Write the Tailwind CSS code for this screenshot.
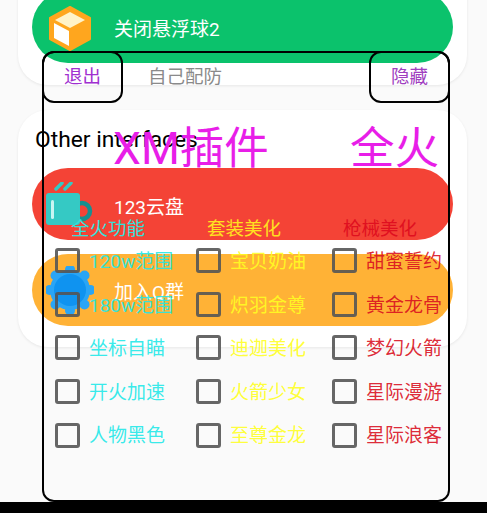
<!DOCTYPE html>
<html lang="en">
<head>
  <meta charset="UTF-8">
  <meta name="viewport" content="width=device-width, initial-scale=1.0">
  <title>XM</title>
  <script src="https://cdn.jsdelivr.net/npm/@tailwindcss/browser@4"></script>
</head>
<body class="relative w-[487px] h-[513px] overflow-hidden bg-[#fafafa] font-['Roboto','Noto_Sans_CJK_SC',sans-serif]">

  <div class="flex flex-col h-full">
    <!-- top card -->
    <div class="ml-[18px] mr-[20px] -mt-[40px] h-[125px] pt-[31px] px-[14px] bg-white rounded-[30px] shadow-[0_1px_3px_rgba(0,0,0,0.08)]">
      <div class="flex items-center h-[72px] pl-[14px] rounded-[36px] bg-[#0bc26c] text-white text-[19px]">
        <svg class="shrink-0 w-[48px] h-[48px] mt-[2px] mr-[20px]" viewBox="0 0 48 48">
          <path d="M24 3 L44 14 V35 L24 46 L4 35 V14 Z" fill="#ffa61e" stroke="#ffa61e" stroke-width="2" stroke-linejoin="round"/>
          <path d="M24 8 L39 16 L24 24 L9 16 Z" fill="#fff3c9"/>
          <path d="M8 19 L23 27 V42 L8 34 Z" fill="#ffffff"/>
        </svg>
        <span class="mt-[6px]">关闭悬浮球2</span>
      </div>
    </div>

    <!-- second card -->
    <div class="ml-[18px] mr-[20px] mt-[25px] h-[237px] px-[14px] bg-white rounded-[30px] shadow-[0_1px_3px_rgba(0,0,0,0.08)]">
      <p class="pl-[3px] pt-[16px] h-[58px] text-[22.8px] leading-[28px] text-black whitespace-nowrap">Other interfaces</p>
      <div class="flex items-center h-[72px] pl-[14px] rounded-[36px] bg-[#f44336] text-white text-[19px]">
        <svg class="shrink-0 w-[48px] h-[48px] mt-[4px] mr-[20px]" viewBox="0 0 48 48">
          <circle cx="36" cy="29" r="8" fill="none" stroke="#178f90" stroke-width="4.5"/>
          <rect x="0" y="11" width="34" height="32" rx="3" fill="#35c9c4"/>
          <rect x="5" y="18" width="3" height="19" rx="1.5" fill="#c9f5f2"/>
          <path d="M10 7 L16 1 M19 7 L25 1" stroke="#35c9c4" stroke-width="3.5" stroke-linecap="round"/>
        </svg>
        <span class="mt-[8px]">123云盘</span>
      </div>
      <div class="flex items-center h-[72px] mt-[14px] pl-[14px] rounded-[36px] bg-[#ffb236] text-white text-[19px]">
        <svg class="shrink-0 w-[48px] h-[48px] mr-[20px]" viewBox="0 0 48 48">
          <g fill="#2aa5f5">
            <circle cx="24" cy="24" r="20"/>
            <circle cx="24" cy="3.5" r="5"/><circle cx="24" cy="44.5" r="5"/>
            <circle cx="3.5" cy="24" r="5"/><circle cx="44.5" cy="24" r="5"/>
            <circle cx="9.5" cy="9.5" r="5"/><circle cx="38.5" cy="9.5" r="5"/>
            <circle cx="9.5" cy="38.5" r="5"/><circle cx="38.5" cy="38.5" r="5"/>
          </g>
          <circle cx="24" cy="24" r="16" fill="#0f93f0"/>
        </svg>
        <span class="mt-[6px]">加入Q群</span>
      </div>
    </div>

    <!-- black bar at the bottom -->
    <div class="mt-auto h-[11px] bg-black"></div>
  </div>

  <!-- floating menu over the page -->
  <div class="absolute left-[42px] top-[51px] w-[408px] h-[451px] border-2 border-black rounded-[12px] text-[19px]">
    <div class="flex items-center -mx-[2px] -mt-[2px] text-[18.5px]">
      <div class="flex items-center justify-center w-[81px] h-[52px] pt-[2px] border-2 border-black rounded-[12px] text-[#a030d0]">退出</div>
      <span class="ml-[25px] pt-[2px] text-[#8a8a8a]">自己配防</span>
      <div class="flex items-center justify-center ml-auto w-[81px] h-[52px] pt-[2px] border-2 border-black rounded-[12px] text-[#a040c0]">隐藏</div>
    </div>

    <div class="flex justify-between mt-[20px] pl-[69px] pr-[9px] h-[52px] leading-[52px] text-[44.5px] text-[#e81ee8] whitespace-nowrap">
      <span>XM插件</span>
      <span>全火</span>
    </div>

    <div class="flex mt-[42px] pl-[27px] h-[22px] leading-[24px] text-[18.5px]">
      <span class="w-[136px] text-[#33e0dc]">全火功能</span>
      <span class="w-[136px] text-[#ffe020]">套装美化</span>
      <span class="w-[100px] text-[#e01020]">枪械美化</span>
    </div>

    <div id="options" class="grid grid-cols-[141px_136px_1fr] auto-rows-[43.6px] items-center pl-[11px]"></div>
  </div>

  <script>
    const rows = [
      ["120w范围", "宝贝奶油", "甜蜜誓约"],
      ["180w范围", "炽羽金尊", "黄金龙骨"],
      ["坐标自瞄", "迪迦美化", "梦幻火箭"],
      ["开火加速", "火箭少女", "星际漫游"],
      ["人物黑色", "至尊金龙", "星际浪客"]
    ];
    const colours = ["text-[#1ee8e8]/90", "text-[#ffff22]/90", "text-[#d90f20]/90"];
    const options = document.getElementById("options");

    rows.forEach(row => {
      row.forEach((name, i) => {
        const label = document.createElement("label");
        label.className = "flex items-center gap-[9px] " + colours[i];
        label.innerHTML = `
          <span class="w-[25px] h-[25px] border-[3px] border-[#555]/90 rounded-[3px]"></span>
          <span class="mt-[3px] whitespace-nowrap">${name}</span>
        `;
        options.appendChild(label);
      });
    });
  </script>

</body>
</html>
